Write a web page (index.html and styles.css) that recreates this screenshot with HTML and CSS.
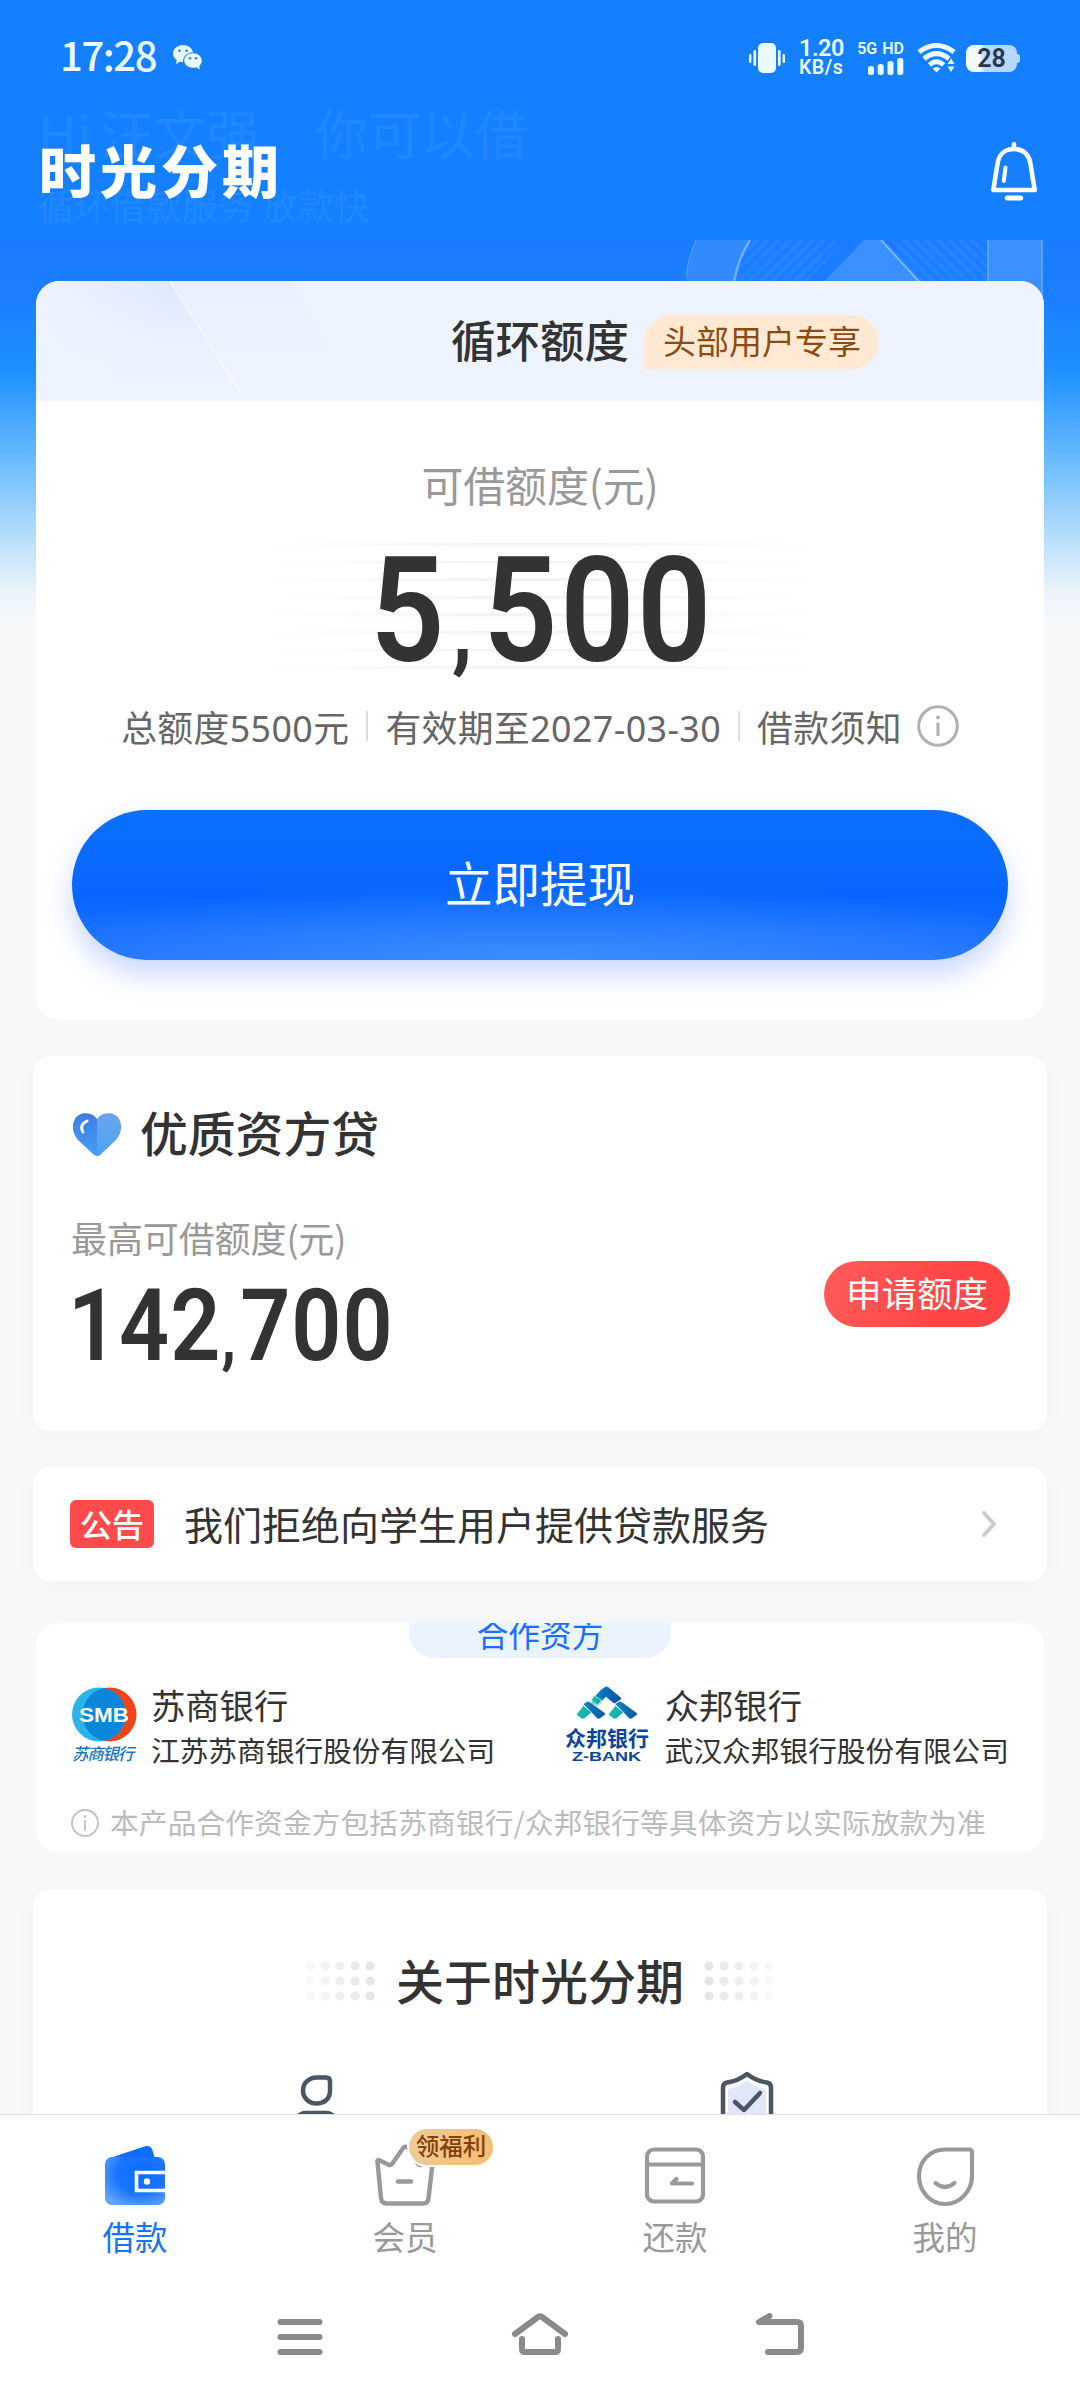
FILE: index.html
```html
<!DOCTYPE html>
<html lang="zh-CN">
<head>
<meta charset="utf-8">
<title>时光分期</title>
<link rel="stylesheet" href="styles.css">
</head>
<body>
<div class="screen">
  <header class="header">
    <div class="status">
      <span class="clock">17:28</span>
      <svg class="wechat" width="29" height="26" viewBox="0 0 29 26">
        <path d="M10 0C4.500 0 0 3.800 0 8.500c0 2.700 1.500 5 3.700 6.500L3 19l4-2.200q1.500.4 3 .4C9.500 12 14 7.500 20 7.300 19 3 15 0 10 0Z" fill="#e9fbff"/>
        <path d="M20 8.300c-5 0-8.800 3.200-8.800 7.300s3.800 7.200 8.800 7.200q1.700 0 3.300-.5L27 24.500l-.8-3.500c1.600-1.300 2.600-3.200 2.600-5.400 0-4.100-4-7.300-8.800-7.300Z" fill="#e9fbff"/>
        <g fill="#1480ff"><circle cx="6.500" cy="5.800" r="1.300"/><circle cx="13.500" cy="5.800" r="1.300"/><circle cx="17" cy="13.200" r="1.200"/><circle cx="23" cy="13.200" r="1.200"/></g>
      </svg>
      <svg class="vibrate" width="36" height="30" viewBox="0 0 36 30" fill="#e9fbff">
        <rect x="9" width="18" height="30" rx="5"/><rect x="4.500" y="7" width="2.600" height="16" rx="1.300"/><rect x="29" y="7" width="2.600" height="16" rx="1.300"/><rect y="11" width="2.400" height="9" rx="1.200"/><rect x="33.600" y="11" width="2.400" height="9" rx="1.200"/>
      </svg>
      <div class="speed"><span class="rate">1.20</span><span class="unit">KB/s</span></div>
      <div class="signal">
        <span>5G HD</span>
        <svg width="36" height="17" viewBox="0 0 36 17" fill="#e9fbff"><rect y="8" width="6" height="9" rx="2.500"/><rect x="9.700" y="6" width="6" height="11" rx="2.500"/><rect x="19.500" y="3" width="6" height="14" rx="2.500"/><rect x="29.300" width="6" height="17" rx="2.500"/></svg>
      </div>
      <svg class="wifi" width="38" height="30" viewBox="0 0 38 30" fill="none" stroke="#e9fbff" stroke-width="5">
        <path d="M1 9Q18.500-4 36 9"/><path d="M6 15.800Q18.500 5.500 31 15.800"/><path d="M11.500 22Q18.500 15.500 25.500 22"/><path d="M14.500 25.500q4-3 8 0l-4 4Z" fill="#e9fbff" stroke="none"/>
        <path d="m33 15.500 3.500 5.500h-7ZM33 29l3.500-5.500h-7Z" fill="#e9fbff" stroke="#1480ff" stroke-width="1.500" paint-order="stroke"/>
      </svg>
      <div class="battery"><span>28</span></div>
    </div>
    <div class="titlebar">
      <h1 class="brand">时光分期</h1>
      <svg width="48" height="60" viewBox="0 0 48 60" fill="none" stroke="#fff" stroke-width="4.600" stroke-linecap="round" stroke-linejoin="round">
        <path d="M24 2.300V6M24 7C14 7 8.500 13.500 7.500 22L3.300 48h41.400L40.500 22C39.500 13.500 34 7 24 7Z"/><path d="M15.500 25.500 13.800 39" stroke-width="4"/><path d="M17.300 56h13.400" stroke-width="5"/>
      </svg>
    </div>
    <div class="ghost ghost-hi"><span>Hi</span><span>汪文强</span><span class="ghost-gap">你可以借</span></div>
    <div class="ghost ghost-sub">循环借款服务 放款快</div>
  </header>

  <svg class="pattern" width="360" height="64" viewBox="0 0 360 64">
    <defs>
      <pattern id="hatch" width="8" height="8" patternUnits="userSpaceOnUse" patternTransform="rotate(45)"><rect width="4" height="8" fill="#3a8dff"/></pattern>
      <pattern id="hatch2" width="8" height="8" patternUnits="userSpaceOnUse" patternTransform="rotate(-45)"><rect width="4" height="8" fill="#3a8dff"/></pattern>
    </defs>
    <path d="M44 64Q48 22 63 0H160L100 64Z" fill="url(#hatch)" opacity=".35"/>
    <path d="M191 0H302V64H250Z" fill="url(#hatch2)" opacity=".35"/>
    <path d="M-3 64Q-1 25 10 0H64Q49 22 44 64Z" fill="#338aff"/>
    <path d="M-2 50Q1 20 10 0" stroke="#5ba5ff" fill="none"/>
    <path d="M47 50Q50 22 64 0" stroke="#6bb0ff" stroke-width="2.500" fill="none"/>
    <path d="M178 0h18l58 64H117Z" fill="#3b90ff"/>
    <path d="m195 0 44 48" stroke="#78b6ff" stroke-width="2"/>
    <path d="M302 0h54v64h-54Z" fill="#3a90ff"/><path d="M302 0v64M356 0v64" stroke="#66adff" stroke-width="1.500"/>
  </svg>

  <main class="content">
    <section class="card quota">
      <div class="quota-head">
        <svg class="shine" width="320" height="120" viewBox="0 0 320 120">
          <defs>
            <linearGradient id="sh2" x1="0" y1="0" x2="0" y2="1"><stop offset="0" stop-color="#d8e5fd"/><stop offset="1" stop-color="#ecf2ff" stop-opacity="0"/></linearGradient>
            <linearGradient id="sh1" x1="0" y1="0" x2="1" y2="0"><stop offset="0" stop-color="#edf3ff"/><stop offset="1" stop-color="#edf3ff" stop-opacity="0"/></linearGradient>
          </defs>
          <path d="M0 0h134L210 120H0Z" fill="url(#sh2)" opacity=".75"/><rect width="130" height="120" fill="url(#sh1)"/><path d="M134 0H255L300 80 200 105Z" fill="url(#sh2)" opacity=".3"/>
          <path d="m134 0 72 114" stroke="#fff" opacity=".6" stroke-width="1.500"/>
        </svg>
        <h2>循环额度</h2><span class="tag">头部用户专享</span>
      </div>
      <p class="quota-label">可借额度(元)</p>
      <div class="quota-amount"><span>5<b>,</b>500</span></div>
      <div class="quota-meta">
        <span>总额度5500元</span><i></i><span>有效期至2027-03-30</span><i></i><span>借款须知</span>
        <svg width="42" height="42" viewBox="0 0 42 42" fill="none" stroke="#b0b0b0" stroke-width="3"><circle cx="21" cy="21" r="19.300"/><path d="M21 17.500V31"/><circle cx="21" cy="12.500" r="1.900" fill="#b0b0b0" stroke="none"/></svg>
      </div>
      <button class="primary">立即提现</button>
    </section>

    <section class="card wide loan">
      <div class="loan-title">
        <svg width="50" height="44" viewBox="0 0 50 44">
          <defs><linearGradient id="hl" x1="0" y1="0" x2="0" y2="1"><stop stop-color="#3f7be8"/><stop offset="1" stop-color="#459ff0"/></linearGradient><linearGradient id="hr" x1="0" y1="0" x2="0" y2="1"><stop stop-color="#6ba4ee"/><stop offset="1" stop-color="#4aa3f1"/></linearGradient></defs>
          <path d="M25 6C19-2 7-1 3 6-1 13 1 21 6 27L21 41q4 4 8 0L25 20Z" fill="url(#hl)"/>
          <path d="M25 6C31-2 43-1 47 6c4 7 2 15-3 21L29 41q-2 2-4 2Z" fill="url(#hr)"/>
          <path d="M15 8q-8 4-4 11" fill="none" stroke="#fff" stroke-width="3" stroke-linecap="round"/>
        </svg>
        <h2>优质资方贷</h2>
      </div>
      <div class="loan-body">
        <div><p>最高可借额度(元)</p><div class="loan-amount"><span>142<b>,</b>700</span></div></div>
        <button class="apply">申请额度</button>
      </div>
    </section>

    <section class="card wide notice">
      <span class="notice-tag">公告</span>
      <p>我们拒绝向学生用户提供贷款服务</p>
      <svg width="18" height="28" viewBox="0 0 18 28" fill="none" stroke="#ccc" stroke-width="4" stroke-linecap="round" stroke-linejoin="round"><path d="m4 3 10 11L4 25"/></svg>
    </section>

    <section class="card partners">
      <div class="partners-tab">合作资方</div>
      <div class="banks">
        <div class="bank">
          <svg width="68" height="80" viewBox="0 0 68 80">
            <defs><clipPath id="smb"><circle cx="39.500" cy="28.500" r="27"/></clipPath></defs>
            <circle cx="39.500" cy="28.500" r="27" fill="#ee4417"/><circle cx="29" cy="28.500" r="27" fill="#2bb3ea"/><circle cx="29" cy="28.500" r="27" fill="#0a86da" clip-path="url(#smb)"/>
            <text x="9" y="36" textLength="50" lengthAdjust="spacingAndGlyphs" class="smb-text">SMB</text>
            <text x="2" y="74" textLength="62" class="smb-name">苏商银行</text>
          </svg>
          <div><h3>苏商银行</h3><p>江苏苏商银行股份有限公司</p></div>
        </div>
        <div class="bank">
          <svg width="84" height="80" viewBox="0 0 84 80">
            <defs><linearGradient id="za"><stop stop-color="#1cc3a4"/><stop offset="1" stop-color="#12a3b4"/></linearGradient><linearGradient id="zb"><stop stop-color="#0a8cc4"/><stop offset="1" stop-color="#0a4f9f"/></linearGradient></defs>
            <g stroke="#fff" stroke-width=".6" stroke-linejoin="round">
              <path d="M28 10 37 17 32 20 26 17Z" fill="url(#za)"/>
              <path d="M36 3.500 39.500 1q2-1.300 4 0L56 11.500q1 1 0 2L51 17q-1.500 1-3 0L41 11 34 18q-1.500 1-3 0L27 15q-1-1 0-2Z" fill="url(#zb)"/>
              <path d="M29 9.500 36.500 14 34 18q-1.500 1-3 0l-4-3q-1-1 0-2Z" fill="url(#za)"/>
              <path d="m18 18 3-2q2-1.300 4 0l15 11q1 1 0 2l-5 3.500q-1.500 1-3 0Z" fill="url(#zb)"/>
              <path d="m18.500 19.500 8 7-7 6q-1.500 1-3 0L12 29.500q-1-1 0-2Z" fill="url(#za)"/>
              <path d="m50 18 3-2q2-1.300 4 0l15 11q1 1 0 2l-5 3.500q-1.500 1-3 0Z" fill="url(#zb)"/>
              <path d="m50.500 19.500 8 7-7 6q-1.500 1-3 0L44 29.500q-1-1 0-2Z" fill="url(#za)"/>
            </g>
            <text x="0" y="59.500" textLength="84" class="zb-name">众邦银行</text>
            <text x="7" y="74.500" textLength="69" lengthAdjust="spacingAndGlyphs" class="zb-en">Z-BANK</text>
          </svg>
          <div><h3>众邦银行</h3><p>武汉众邦银行股份有限公司</p></div>
        </div>
      </div>
      <div class="partners-note">
        <svg width="30" height="30" viewBox="0 0 30 30" fill="none" stroke="#c4c4c4" stroke-width="2"><circle cx="15" cy="15" r="13"/><path d="M15 12v10.500"/><circle cx="15" cy="8.500" r="1.400" fill="#c4c4c4" stroke="none"/></svg>
        <span>本产品合作资金方包括苏商银行/众邦银行等具体资方以实际放款为准</span>
      </div>
    </section>

    <section class="card wide about">
      <div class="about-title"><i class="dots dots-left"></i><h2>关于时光分期</h2><i class="dots dots-right"></i></div>
      <div class="about-icons">
        <svg width="64" height="60" viewBox="0 0 64 60" fill="none" stroke="#4a5662" stroke-width="4.500"><path d="M33 6.500h9q4 0 4 4V20c0 8-6 12.500-13.500 12.500S19 27 19 19.500 25 6.500 33 6.500Z"/><path d="M8 62q3-20 14-20h20q11 0 14 20"/></svg>
        <svg width="64" height="60" viewBox="0 0 64 60" fill="none" stroke="#4a5662" stroke-width="4.500" stroke-linejoin="round"><path d="M13 18Q25 16 32 9q7 7 19 9V60H13Z" fill="#e0e7fd" stroke="none"/><path d="M32 3q9 7 20 8.500 4 1 4 5V48Q55 60 32 70 9 60 8 48V16.500q0-4 4-5Q23 10 32 3Z"/><path d="m20 31 9 8 16-17" stroke-linecap="round"/></svg>
      </div>
    </section>
  </main>

  <footer class="bottom">
    <nav class="tabs">
      <a class="tab active">
        <svg width="62" height="66" viewBox="0 0 62 66">
          <defs><radialGradient id="wl" cx=".6" cy=".35" r=".75"><stop stop-color="#0b6cff"/><stop offset=".55" stop-color="#1a74ff"/><stop offset="1" stop-color="#64a4ff"/></radialGradient></defs>
          <path d="M6 14 41 2.200q6-1.200 7.500 4L51 15H6Z" fill="#0f6dfd"/><rect x="1" y="13" width="60" height="48" rx="7" fill="url(#wl)"/>
          <path d="M61 28.500H32.500v18H61" fill="none" stroke="#fff" stroke-width="3.600"/><circle cx="43" cy="37.500" r="3.200" fill="#fff"/>
        </svg><span>借款</span>
      </a>
      <a class="tab">
        <svg width="62" height="66" viewBox="0 0 62 66" fill="none" stroke="#999" stroke-width="4.400" stroke-linecap="round" stroke-linejoin="round"><path d="M33 3q-3-1-4.500 2L18 20q-1 1.500-3 1L5 16q-2 0-1.500 2L7 54q.5 5.500 6 5.500h36q5 0 5.500-5L58.500 20q0-3-3-1.500L47 21q-2 .5-3-1L34 4"/><path d="M24 37.500h13" stroke-width="4.600"/></svg><span>会员</span>
        <em>领福利</em>
      </a>
      <a class="tab">
        <svg width="62" height="66" viewBox="0 0 62 66" fill="none" stroke="#999" stroke-width="4.200" stroke-linecap="round" stroke-linejoin="round"><rect x="3" y="5.500" width="56" height="52" rx="7"/><path d="M3 20.500h56M48 39.500H28l4.500-4.500"/></svg><span>还款</span>
      </a>
      <a class="tab">
        <svg width="62" height="66" viewBox="0 0 62 66" fill="none" stroke="#999" stroke-width="4.200" stroke-linecap="round" stroke-linejoin="round"><path d="M31 5.500h24q3 0 3 3V32c0 15-12 28-27 28S5 47 5 32 16 5.500 31 5.500Z"/><path d="M21.500 39q9.500 8 19 0"/></svg><span>我的</span>
      </a>
    </nav>
    <div class="sysnav">
      <svg width="60" height="50" viewBox="0 0 60 50" fill="none" stroke="#8a8a8a" stroke-width="6" stroke-linecap="round"><path d="M10.500 10h39M10.500 25h39M10.500 40h39"/></svg>
      <svg width="60" height="50" viewBox="0 0 60 50" fill="none" stroke="#8a8a8a" stroke-width="6" stroke-linecap="round" stroke-linejoin="round"><path d="m5 22 23-17q2-1.500 4 0l23 17M12 27v10q0 3 3 3h30q3 0 3-3V27"/></svg>
      <svg width="60" height="50" viewBox="0 0 60 50" fill="none" stroke="#8a8a8a" stroke-width="6" stroke-linecap="round" stroke-linejoin="round"><path d="M19.500 4 9 10h38q4 0 4 4v22q0 4-4 4H18"/></svg>
    </div>
  </footer>
</div>
</body>
</html>
```
FILE: styles.css
```css
* { box-sizing: border-box; margin: 0; padding: 0; }
body { font-family: "Noto Sans CJK SC", sans-serif; color: #333; background: #f6f8fa; }
svg { display: block; flex: none; }
h1, h2, h3, i, em { font-weight: 500; font-style: normal; }
button { border: 0; font-family: inherit; color: #fff; }

.screen {
  position: relative;
  display: flex;
  flex-direction: column;
  width: 1080px;
  height: 2400px;
  overflow: hidden;
  background: linear-gradient(#1a7bff 240px, #1b80ff 300px, #1e90ff 370px, #60b5ff 448px, #b8e0fb 540px, #eaf3fa 590px, #f6f8fa 615px);
}

.header { position: relative; flex: none; height: 240px; background: #1480ff; }
.status { display: flex; align-items: center; height: 116px; padding: 0 60px 0 60px; color: #e9fbff; }
.clock { font: 500 40px/40px "Noto Sans CJK SC", sans-serif; letter-spacing: -1.400px; width: 113px; height: 48px; }
.vibrate { margin-left: auto; }
.speed { display: flex; flex-direction: column; width: 45px; margin-left: 14px; font-weight: 700; }
.rate { font: 600 23.500px/19px Roboto, sans-serif; letter-spacing: -.5px; }
.unit { font: 600 19.500px/19px Roboto, sans-serif; letter-spacing: .5px; }
.signal { display: flex; flex-direction: column; align-items: flex-end; width: 50px; margin-left: 10px; margin-right: 1px; font: 600 16px/15px Roboto, sans-serif; word-spacing: 1px; white-space: nowrap; }
.signal svg { margin-top: 2px; }
.wifi { margin-left: 13px; }
.battery { position: relative; width: 51px; height: 27px; margin-left: 10px; margin-right: 3px; border-radius: 8px; background: linear-gradient(90deg, #f2fbff 14px, #b8d9ff 18px); color: #28364a; font: 600 25px/28px Roboto, sans-serif; text-align: center; }
.battery::after { content: ""; position: absolute; right: -3px; top: 9px; width: 4px; height: 9px; border-radius: 0 3px 3px 0; background: #b8d9ff; }

.titlebar { display: flex; justify-content: space-between; align-items: center; height: 112px; padding: 0 42px 0 39px; }
.brand { position: relative; z-index: 1; color: #fff; font-size: 57px; line-height: 60px; font-weight: 900; letter-spacing: 4px; padding-bottom: 8px; }
.ghost { position: absolute; left: 38px; color: #fff; opacity: .055; white-space: pre; }
.ghost-hi { top: 101px; display: flex; font-size: 53.500px; line-height: 62px; }
.ghost-hi span + span { margin-left: 8px; }
.ghost-hi .ghost-gap { margin-left: 54px; }
.ghost-sub { top: 180px; font-size: 36px; line-height: 48px; }
.pattern { position: absolute; left: 686px; top: 240px; }

.content { position: relative; flex: 1; display: flex; flex-direction: column; align-items: center; padding-top: 41px; min-height: 0; }
.card { flex: none; width: 1008px; border-radius: 24px; background: #fff; overflow: hidden; }
.wide { width: 1014px; border-radius: 18px; box-shadow: 0 4px 24px rgba(40, 50, 70, .025); }

.quota { height: 739px; display: flex; flex-direction: column; align-items: center; }
.quota-head { position: relative; display: flex; align-items: center; align-self: stretch; height: 120px; padding-left: 415px; gap: 15px; background: #edf3ff; }
.shine { position: absolute; left: 0; top: 0; }
.quota-head h2 { position: relative; font-size: 44.500px; line-height: 60px; padding-bottom: 4px; }
.tag { height: 54px; margin-top: 2px; padding: 0 18px 0 19px; border-radius: 27px 27px 27px 4px; background: #ffe9d2; color: #8b4c12; font-size: 33px; line-height: 50px; }
.quota-label { margin-top: 53px; font-size: 42px; line-height: 60px; color: #999; letter-spacing: -.2px; }
.quota-amount {
  display: flex; justify-content: center; width: 560px; height: 126px; margin-top: 29px;
  background: linear-gradient(90deg, #fff, transparent 40%, transparent 60%, #fff), repeating-linear-gradient(#f4f4f4 0 2px, #fff 4px 17.600px);
}
.quota-amount span { font: 600 147px/136px Roboto, sans-serif; letter-spacing: 3px; transform: translateX(2px) scaleX(.885); }
.quota-amount b { font-size: 100px; font-weight: 600; letter-spacing: 12px; margin-left: 5px; }
.quota-meta { display: flex; align-items: center; margin-top: 35px; height: 44px; font-family: "Noto Sans", "Noto Sans CJK SC", sans-serif; font-size: 35.800px; letter-spacing: .4px; color: #666; white-space: nowrap; }
.quota-meta span { padding-bottom: 1px; }
.quota-meta i { width: 2px; height: 30px; margin: 0 17px; background: #ddd; }
.quota-meta svg { margin-left: 15px; }
.primary {
  width: 936px; height: 150px; margin-top: 62px; border-radius: 75px; font-size: 47.500px; line-height: 140px; padding-bottom: 6px;
  background: radial-gradient(ellipse 62% 50% at 50% 100%, rgba(66, 148, 255, .8), rgba(58, 142, 255, 0)), linear-gradient(#0b70ff, #0766ff 58%, #2273ff);
  box-shadow: 0 14px 28px rgba(50, 100, 255, .26);
}

.loan { height: 375px; margin-top: 36px; padding: 49px 37px 0 39px; }
.loan-title { display: flex; align-items: center; gap: 18px; height: 60px; }
.loan-title h2 { font-size: 47.800px; line-height: 56px; padding-bottom: 6px; }
.loan-body { display: flex; justify-content: space-between; margin-top: 49px; }
.loan-body p { font-size: 36px; line-height: 46px; padding-bottom: 6px; margin-left: -1px; letter-spacing: -.1px; color: #999; }
.loan-amount { height: 90px; margin-top: 10px; }
.loan-amount span { display: inline-block; font: 600 101px/100px Roboto, sans-serif; letter-spacing: 1px; margin-left: -4px; transform: scaleX(.87); transform-origin: 0 0; }
.loan-amount b { font-size: 72px; font-weight: 600; letter-spacing: 5px; }
.apply { width: 186px; height: 66px; margin-top: 47px; border-radius: 33px; font-size: 35.500px; line-height: 62px; padding-bottom: 4px; background: linear-gradient(110deg, #ff5c5c, #ff4545 65%); }

.notice { display: flex; align-items: center; height: 114px; margin-top: 36px; padding: 0 49px 0 37px; }
.notice-tag { width: 84px; height: 48px; border-radius: 6px; background: #ff4b4b; color: #fff; font-size: 32px; line-height: 46px; text-align: center; font-weight: 500; }
.notice p { margin-left: 30px; font-size: 39px; line-height: 54px; padding-bottom: 3px; }
.notice svg { margin-left: auto; }

.partners { height: 230px; margin-top: 42px; }
.partners-tab { width: 262px; height: 35px; margin: 0 auto; border-radius: 0 0 26px 26px; background: #ebf3ff; color: #1a6fff; font-size: 31.700px; line-height: 21px; text-align: center; }
.banks { display: flex; justify-content: space-between; padding: 28px 35px 0 34px; }
.bank { display: flex; gap: 13px; }
.bank:last-child { gap: 16px; }
.bank h3 { font-size: 34.300px; line-height: 40px; font-weight: 400; margin-top: -2px; }
.bank p { font-size: 28.700px; line-height: 40px; margin-top: 6px; white-space: nowrap; }
.smb-text { font: 700 20px "Liberation Sans", sans-serif; fill: #fff; }
.smb-name { font: italic 500 16.500px "Noto Sans CJK SC", sans-serif; fill: #1479bf; }
.zb-name { font: 700 21px "Noto Sans CJK SC", sans-serif; fill: #0a459b; }
.zb-en { font: 700 13.500px "Liberation Sans", sans-serif; fill: #0a459b; }
.partners-note { display: flex; align-items: center; gap: 10px; height: 40px; margin-top: 33px; padding-left: 34px; font-size: 28.700px; letter-spacing: .13px; color: #bbb; white-space: nowrap; }
.partners-note span { line-height: 40px; padding-bottom: 2px; }

.about { height: 500px; margin-top: 36px; padding-top: 59px; }
.about-title { display: flex; justify-content: center; align-items: center; gap: 20px; height: 66px; }
.about-title h2 { font-size: 48px; line-height: 60px; padding-bottom: 5px; }
.dots { width: 71px; height: 42px; background: radial-gradient(circle at 5px 5px, #e4e4e4 4px, transparent 5px) 0 1px / 15px 15px; }
.dots-left { -webkit-mask-image: linear-gradient(90deg, rgba(0, 0, 0, .2), #000); }
.dots-right { -webkit-mask-image: linear-gradient(270deg, rgba(0, 0, 0, .2), #000); }
.about-icons { display: flex; justify-content: space-between; margin-top: 57px; padding: 0 268px 0 251px; }

.bottom { position: relative; flex: none; height: 286px; border-top: 1px solid #dfdfdf; background: #fff; }
.tabs { display: grid; grid-template-columns: repeat(4, 270px); height: 160px; }
.tab { position: relative; display: flex; flex-direction: column; align-items: center; padding-top: 29px; color: #999; font-size: 32.500px; }
.tab span { line-height: 44px; margin-top: 4px; }
.active { color: #1672ff; }
.tab em { position: absolute; left: 137px; top: 12px; width: 88px; height: 40px; border: 2px solid #fff; border-radius: 20px; background: linear-gradient(100deg, #eecb9b, #f3bd71); color: #84400b; font-size: 23.500px; line-height: 33px; font-weight: 500; text-align: center; }
.sysnav { display: flex; justify-content: center; gap: 180px; padding-top: 37px; }
```
